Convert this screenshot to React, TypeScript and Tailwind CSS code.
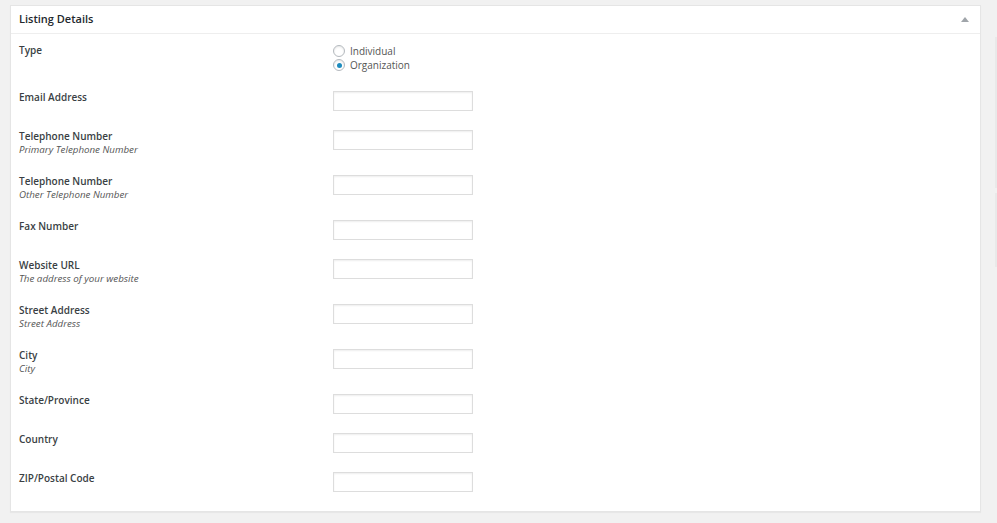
import React from 'react';

type Field = {
  label: string;
  description?: string;
};

const fields: Field[] = [
  { label: 'Email Address' },
  { label: 'Telephone Number', description: 'Primary Telephone Number' },
  { label: 'Telephone Number', description: 'Other Telephone Number' },
  { label: 'Fax Number' },
  { label: 'Website URL', description: 'The address of your website' },
  { label: 'Street Address', description: 'Street Address' },
  { label: 'City', description: 'City' },
  { label: 'State/Province' },
  { label: 'Country' },
  { label: 'ZIP/Postal Code' },
];

function Radio({ checked, label }: { checked?: boolean; label: string }) {
  return (
    <label className="flex items-center h-[14px] gap-[5px] text-[10px] text-[#555]">
      <span className="w-[12px] h-[12px] rounded-full border border-[#b4b9be] bg-white shadow-[inset_0_1px_2px_rgba(0,0,0,0.1)] flex items-center justify-center">
        {checked && <span className="w-[5px] h-[5px] rounded-full bg-[#1e8cbe]" />}
      </span>
      {label}
    </label>
  );
}

export default function App() {
  return (
    <div
      className="min-h-screen bg-[#f1f1f1] flex"
      style={{ fontFamily: '"Open Sans", "Liberation Sans", sans-serif' }}
    >
      <div className="flex-1 pl-[10px] pr-[14px] pt-[5px]">
        <div className="bg-white border border-[#e5e5e5] shadow-[0_1px_1px_rgba(0,0,0,0.04)]">
          {/* Header */}
          <div className="h-[28px] border-b border-[#eeeeee] flex items-center justify-between pl-[8px] pr-[11px]">
            <h2 className="text-[11px] font-semibold text-[#23282d]">Listing Details</h2>
            <span className="w-0 h-0 border-l-[4px] border-r-[4px] border-b-[5px] border-l-transparent border-r-transparent border-b-[#a0a5aa]" />
          </div>

          {/* Body */}
          <div className="pt-[10px] pl-[8px]">
            <div className="flex items-start pb-[19px]">
              <div className="w-[314px] text-[10px] leading-[13px] font-semibold text-[#3a3f44]">Type</div>
              <div className="flex flex-col">
                <Radio label="Individual" />
                <Radio label="Organization" checked />
              </div>
            </div>

            {fields.map((field, i) => (
              <div key={i} className="flex items-start pb-[19px]">
                <div className="w-[314px]">
                  <div className="text-[10px] leading-[13px] font-semibold text-[#3a3f44]">{field.label}</div>
                  {field.description && (
                    <div className="text-[9.75px] leading-[13px] italic text-[#555]">{field.description}</div>
                  )}
                </div>
                <input
                  type="text"
                  className="w-[140px] h-[20px] border border-[#dddddd] bg-white shadow-[inset_0_1px_2px_rgba(0,0,0,0.07)] outline-none"
                />
              </div>
            ))}
          </div>
        </div>
      </div>
      <div className="w-[2px] pt-[37px] flex flex-col gap-[5px]">
        <div className="h-[151px] bg-[#e9e9e9]" />
        <div className="h-[74px] bg-[#e9e9e9]" />
      </div>
    </div>
  );
}
